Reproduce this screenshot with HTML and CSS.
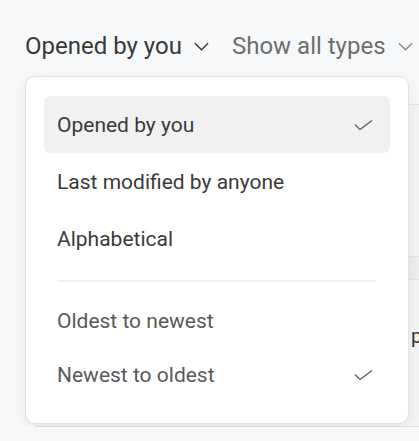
FILE: index.html
```html
<!DOCTYPE html>
<html lang="en">
  <head>
    <meta charset="UTF-8" />
    <meta name="viewport" content="width=device-width, initial-scale=1.0" />
    <title>Files</title>
    <link rel="stylesheet" href="styles.css">
  </head>
  <body>
    <div class="toolbar">
      <button class="picker picker-main">
        Opened by you
        <svg class="chevron" viewBox="0 0 16 9"><path d="M1 1l7 7 7-7" /></svg>
      </button>
      <button class="picker picker-muted">
        Show all types
        <svg class="chevron" viewBox="0 0 16 9"><path d="M1 1l7 7 7-7" /></svg>
      </button>
    </div>

    <div class="content">
      <div class="file-card">
        <div class="file-head"></div>
        <div class="file-band"></div>
        <div class="file-row">
          <span class="file-name">project</span>
        </div>
      </div>

      <div class="menu">
        <div class="menu-section">
          <div class="menu-item selected">
            <span>Opened by you</span>
            <svg class="check" viewBox="0 0 19 10"><path d="M1 4.5l5 5 12-9" /></svg>
          </div>
          <div class="menu-item"><span>Last modified by anyone</span></div>
          <div class="menu-item"><span>Alphabetical</span></div>
        </div>
        <div class="menu-divider"></div>
        <div class="menu-section order">
          <div class="menu-item"><span>Oldest to newest</span></div>
          <div class="menu-item">
            <span>Newest to oldest</span>
            <svg class="check" viewBox="0 0 19 10"><path d="M1 4.5l5 5 12-9" /></svg>
          </div>
        </div>
      </div>
    </div>
  </body>
</html>
```

FILE: styles.css
```css
body {
  margin: 0;
  background: #f7f8f9;
  font-family: Roboto, "Noto Sans", sans-serif;
  overflow: hidden;
}
.toolbar {
  display: flex;
  gap: 23px;
  padding: 30px 0 0 25px;
  height: 32px;
}
.picker {
  display: flex;
  align-items: center;
  gap: 12px;
  border: 0;
  background: none;
  padding: 0;
  font-family: inherit;
  font-size: 24px;
  white-space: nowrap;
  height: 32px;
}
.picker-main {
  color: #383838;
}
.picker-muted {
  color: #6e6e6e;
}
.chevron {
  width: 15px;
  height: 9px;
  fill: none;
  stroke: currentColor;
  stroke-width: 1.5;
}
.picker-muted .chevron {
  stroke: #888;
}
.content {
  position: relative;
  padding-top: 42px;
}
.file-card {
  margin-left: 32px;
  width: 420px;
  height: 321px;
  background: #f3f4f5;
  border: 1px solid #e1e3e5;
  border-radius: 6px;
}
.file-head {
  height: 151px;
}
.file-band {
  height: 22px;
  background: #eceef0;
  border-top: 1px solid #e2e4e6;
  border-bottom: 1px solid #e2e4e6;
}
.file-row {
  padding: 44px 0 0 378px;
}
.file-name {
  font-size: 20px;
  color: #333;
}
.menu {
  position: absolute;
  left: 25px;
  top: 14px;
  width: 346px;
  padding: 19px 18px 21px 18px;
  background: #fff;
  border: 1px solid #e2e2e2;
  border-radius: 10px;
  box-shadow: 0 3px 14px rgba(0, 0, 0, 0.07);
}
.menu-item {
  display: flex;
  align-items: center;
  justify-content: space-between;
  height: 57px;
  padding: 0 17px 0 13px;
  border-radius: 6px;
  font-size: 21px;
  color: #3a3a3a;
}
.menu-item.selected {
  background: #f1f1f1;
}
.order .menu-item {
  height: 54px;
  color: #595959;
}
.menu-divider {
  height: 2px;
  margin: 13px 14px 12px 13px;
  background: #efefef;
}
.check {
  width: 19px;
  height: 10px;
  fill: none;
  stroke: #666;
  stroke-width: 1.4;
}
```
